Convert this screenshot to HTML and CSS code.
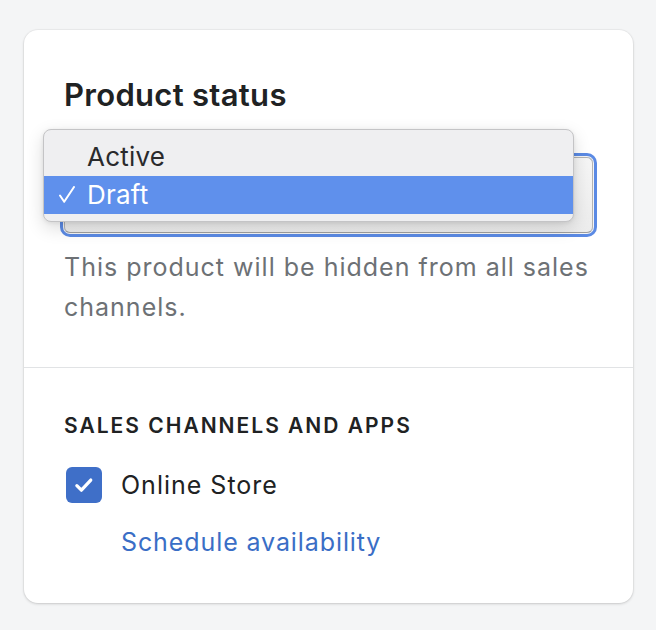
FILE: index.html
```html
<!DOCTYPE html>
<html lang="en">
<head>
<meta charset="utf-8">
<title>Product status</title>
<link rel="stylesheet" href="styles.css">
</head>
<body>
<div class="card">
  <section class="section">
    <h2 class="title">Product status</h2>
    <div class="select-wrap">
      <div class="select"></div>
      <ul class="menu">
        <li class="option">Active</li>
        <li class="option selected"><svg class="check" viewBox="0 0 16 17" width="16" height="17"><path d="M1 9.5l4.2 6.3L15 1" fill="none" stroke="#fff" stroke-width="2" stroke-linecap="round" stroke-linejoin="round"/></svg>Draft</li>
      </ul>
    </div>
    <p class="help">This product will be hidden from all sales channels.</p>
  </section>
  <section class="section section-channels">
    <h3 class="subheading">SALES CHANNELS AND APPS</h3>
    <div class="channel">
      <span class="checkbox">
        <svg viewBox="0 0 20 20" width="26" height="26"><path d="M4.5 10.5l3.5 3.5 7.2-7.8" fill="none" stroke="#fff" stroke-width="2.5" stroke-linecap="round" stroke-linejoin="round"/></svg>
      </span>
      <span class="channel-name">Online Store</span>
    </div>
    <a class="link" href="#">Schedule availability</a>
  </section>
</div>
</body>
</html>
```
FILE: styles.css
```css
* { box-sizing: border-box; }
html, body { margin: 0; padding: 0; }
body {
  background: #f4f5f6;
  font-family: Inter, "Liberation Sans", sans-serif;
  color: #202223;
  width: 656px;
  height: 630px;
  overflow: hidden;
}
.card {
  margin: 30px 0 0 24px;
  width: 609px;
  height: 573px;
  background: #fff;
  border-radius: 14px;
  box-shadow: 0 1px 3px rgba(0,0,0,0.16), 0 0 0 1px rgba(0,0,0,0.03);
}
.section { padding: 45px 40px 40px; }
.title {
  margin: 0;
  font-size: 31px;
  line-height: 40px;
  font-weight: 600;
  letter-spacing: 0.3px;
}
.select-wrap {
  position: relative;
  margin-top: 42px;
}
.select {
  height: 76px;
  border: 1px solid #b3b3b3;
  border-bottom-color: #9e9e9e;
  border-radius: 6px;
  background: linear-gradient(#f6f6f6, #ececec);
  box-shadow: 0 0 0 1px #f4f4f4, 0 0 0 4px #5b8ae4;
}
.menu {
  position: absolute;
  left: -21px;
  top: -28px;
  width: 531px;
  height: 93px;
  margin: 0;
  padding: 8px 0;
  list-style: none;
  background: #efeff1;
  border: 1px solid #c4c4c6;
  border-radius: 8px;
  box-shadow: 0 6px 18px rgba(0,0,0,0.14), 0 1px 4px rgba(0,0,0,0.08);
}
.option {
  position: relative;
  height: 38px;
  line-height: 38px;
  padding-left: 43px;
  font-size: 26px;
  letter-spacing: 0.2px;
  color: #2a2a2c;
}
.option.selected {
  background: #5f90ec;
  color: #fff;
}
.check {
  position: absolute;
  left: 15px;
  top: 10px;
}
.help {
  margin: 14px 0 0;
  font-size: 25px;
  line-height: 40px;
  letter-spacing: 1px;
  color: #6d7175;
}
.section-channels {
  border-top: 1px solid #e1e3e5;
  padding: 44px 40px 42px;
}
.subheading {
  margin: 0;
  font-size: 21px;
  line-height: 28px;
  font-weight: 600;
  letter-spacing: 2px;
}
.channel {
  display: flex;
  align-items: center;
  gap: 19px;
  margin-top: 27px;
  padding-left: 2px;
}
.checkbox {
  width: 36px;
  height: 36px;
  border-radius: 6px;
  background: #3f6fc8;
  display: flex;
  align-items: center;
  justify-content: center;
}
.channel-name {
  font-size: 25px;
  line-height: 36px;
  letter-spacing: 1px;
}
.link {
  display: block;
  margin-top: 21px;
  margin-left: 57px;
  font-size: 25px;
  line-height: 36px;
  letter-spacing: 0.9px;
  color: #3a6ec6;
  text-decoration: none;
}
```
